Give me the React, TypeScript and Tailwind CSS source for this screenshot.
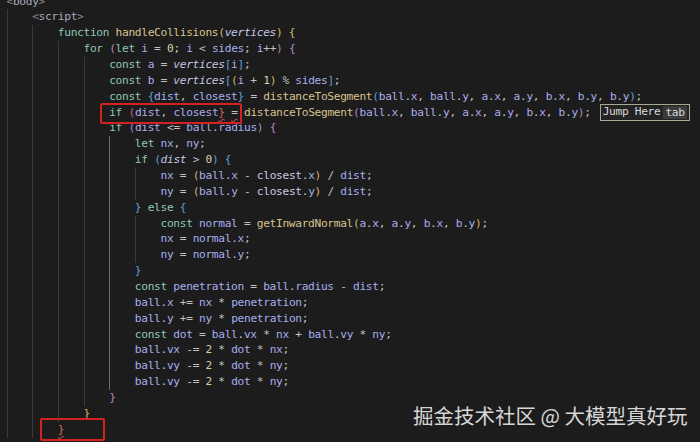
import React from "react";

type Tok = [string, string];

const K = "text-[#8ec7b6]";
const F = "text-[#d8c38e]";
const V = "text-[#a8aeee]";
const PI = "text-[#c3c6e4] italic";
const C = "text-[#c9cbe0]";
const O = "text-[#c2c2c2]";
const N = "text-[#d9cfa0]";
const B1 = "text-[#d6b56c]";
const B2 = "text-[#b884c6]";
const B3 = "text-[#5b9fdc]";
const R = "text-[#c86a6a]";
const RS = "text-[#c86a6a] underline decoration-wavy decoration-[#c04a4a] underline-offset-2";
const OS = "text-[#c2c2c2] underline decoration-wavy decoration-[#c04a4a] underline-offset-2";
const T = "text-[#8a8a8a]";
const TN = "text-[#a4a9bb]";

const args = (open: string): Tok[] => [
  ["(", open],
  ["ball", V], [".", O], ["x", V], [", ", O],
  ["ball", V], [".", O], ["y", V], [", ", O],
  ["a", V], [".", O], ["x", V], [", ", O],
  ["a", V], [".", O], ["y", V], [", ", O],
  ["b", V], [".", O], ["x", V], [", ", O],
  ["b", V], [".", O], ["y", V],
];

type Line = { indent: number; toks: Tok[]; tooltip?: boolean };

const lines: Line[] = [
  { indent: 0, toks: [["<", T], ["body", TN], [">", T]] },
  { indent: 1, toks: [["<", T], ["script", TN], [">", T]] },
  { indent: 2, toks: [["function", K], [" ", O], ["handleCollisions", F], ["(", B1], ["vertices", PI], [")", B1], [" ", O], ["{", B1]] },
  { indent: 3, toks: [["for", K], [" ", O], ["(", B2], ["let", K], [" ", O], ["i", V], [" = ", O], ["0", N], ["; ", O], ["i", V], [" < ", O], ["sides", V], ["; ", O], ["i", V], ["++", O], [")", B2], [" ", O], ["{", B2]] },
  { indent: 4, toks: [["const", K], [" ", O], ["a", V], [" = ", O], ["vertices", PI], ["[", B3], ["i", V], ["]", B3], [";", O]] },
  { indent: 4, toks: [["const", K], [" ", O], ["b", V], [" = ", O], ["vertices", PI], ["[", B3], ["(", B1], ["i", V], [" + ", O], ["1", N], [")", B1], [" % ", O], ["sides", V], ["]", B3], [";", O]] },
  { indent: 4, toks: [["const", K], [" ", O], ["{", B3], ["dist", V], [", ", O], ["closest", V], ["}", B3], [" = ", O], ["distanceToSegment", F], ...args(B3), [", ", O], ["b", V], [".", O], ["y", V], [")", B3], [";", O]] },
  { indent: 4, tooltip: true, toks: [["if", K], [" ", O], ["(", R], ["dist", V], [", ", O], ["closest", V], ["}", RS], [" ", O], ["=", OS], [" ", O], ["distanceToSegment", F], ...args(B2), [")", B2], [";", O]] },
  { indent: 4, toks: [["if", K], [" ", O], ["(", B2], ["dist", V], [" <= ", O], ["ball", V], [".", O], ["radius", V], [")", B2], [" ", O], ["{", B2]] },
  { indent: 5, toks: [["let", K], [" ", O], ["nx", V], [", ", O], ["ny", V], [";", O]] },
  { indent: 5, toks: [["if", K], [" ", O], ["(", B3], ["dist", PI], [" > ", O], ["0", N], [")", B3], [" ", O], ["{", B3]] },
  { indent: 6, toks: [["nx", V], [" = ", O], ["(", B1], ["ball", V], [".", O], ["x", V], [" - ", O], ["closest", C], [".", O], ["x", V], [")", B1], [" / ", O], ["dist", V], [";", O]] },
  { indent: 6, toks: [["ny", V], [" = ", O], ["(", B1], ["ball", V], [".", O], ["y", V], [" - ", O], ["closest", C], [".", O], ["y", V], [")", B1], [" / ", O], ["dist", V], [";", O]] },
  { indent: 5, toks: [["}", B3], [" ", O], ["else", K], [" ", O], ["{", B3]] },
  { indent: 6, toks: [["const", K], [" ", O], ["normal", V], [" = ", O], ["getInwardNormal", F], ["(", B1], ["a", V], [".", O], ["x", V], [", ", O], ["a", V], [".", O], ["y", V], [", ", O], ["b", V], [".", O], ["x", V], [", ", O], ["b", V], [".", O], ["y", V], [")", B1], [";", O]] },
  { indent: 6, toks: [["nx", V], [" = ", O], ["normal", V], [".", O], ["x", V], [";", O]] },
  { indent: 6, toks: [["ny", V], [" = ", O], ["normal", V], [".", O], ["y", V], [";", O]] },
  { indent: 5, toks: [["}", B3]] },
  { indent: 5, toks: [["const", K], [" ", O], ["penetration", V], [" = ", O], ["ball", V], [".", O], ["radius", V], [" - ", O], ["dist", V], [";", O]] },
  { indent: 5, toks: [["ball", V], [".", O], ["x", V], [" += ", O], ["nx", V], [" * ", O], ["penetration", V], [";", O]] },
  { indent: 5, toks: [["ball", V], [".", O], ["y", V], [" += ", O], ["ny", V], [" * ", O], ["penetration", V], [";", O]] },
  { indent: 5, toks: [["const", K], [" ", O], ["dot", V], [" = ", O], ["ball", V], [".", O], ["vx", V], [" * ", O], ["nx", V], [" + ", O], ["ball", V], [".", O], ["vy", V], [" * ", O], ["ny", V], [";", O]] },
  { indent: 5, toks: [["ball", V], [".", O], ["vx", V], [" -= ", O], ["2", N], [" * ", O], ["dot", V], [" * ", O], ["nx", V], [";", O]] },
  { indent: 5, toks: [["ball", V], [".", O], ["vy", V], [" -= ", O], ["2", N], [" * ", O], ["dot", V], [" * ", O], ["ny", V], [";", O]] },
  { indent: 5, toks: [["ball", V], [".", O], ["vy", V], [" -= ", O], ["2", N], [" * ", O], ["dot", V], [" * ", O], ["ny", V], [";", O]] },
  { indent: 4, toks: [["}", B2]] },
  { indent: 3, toks: [["}", B1]] },
  { indent: 2, toks: [["}", RS]] },
];

export default function App() {
  return (
    <div className="relative w-[700px] h-[442px] overflow-hidden bg-[#1c1c1c] font-['DejaVu_Sans_Mono',monospace] text-[11.2px] tracking-[-0.32px]">
      <div className="flex flex-col mt-[-6.5px] pl-[6.5px]">
        {lines.map((ln, i) => (
          <div key={i} className="flex h-[15.87px] leading-[15.87px] whitespace-pre">
            {Array.from({ length: ln.indent }).map((_, g) => (
              <span
                key={g}
                className={
                  "shrink-0 w-[25.68px] border-l " +
                  (g === 4 && i >= 9 && i <= 24 ? "border-[#6e6e6e]" : "border-[#3a3a3a]")
                }
              />
            ))}
            {ln.toks.map((tk, j) => (
              <span key={j} className={tk[1]}>
                {tk[0]}
              </span>
            ))}
            {ln.tooltip && (
              <span className="ml-[9px] mt-[-1px] flex items-center h-[17px] border border-[#a9a992] bg-[#232323] pl-[2px] pr-[2px] text-[#d8d8d8]">
                <span>Jump Here</span>
                <span className="ml-[3px] bg-[#3b3b3b] px-[2px] leading-[13px]">tab</span>
              </span>
            )}
          </div>
        ))}
      </div>

      <div className="absolute left-[100px] top-[103px] w-[142px] h-[21px] border-2 border-[#d42222] rounded-[2px]" />
      <div className="absolute left-[40px] top-[418px] w-[65px] h-[23px] border-2 border-[#d42222] rounded-[2px]" />

      <div className="absolute left-[413px] top-[405px] text-[20.5px] leading-none tracking-normal text-[#d6d6d6] font-['Noto_Sans_CJK_SC','Noto_Sans',sans-serif] whitespace-nowrap">
        掘金技术社区 @ 大模型真好玩
      </div>
    </div>
  );
}
